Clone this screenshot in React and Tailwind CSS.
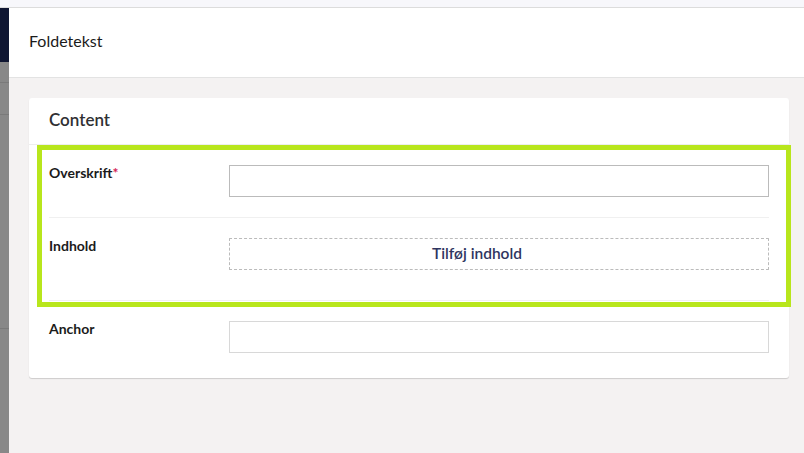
export default function App() {
  const rows = [
    { label: "Overskrift", required: true, kind: "input", border: "border-[#bbbbbb]" },
    { label: "Indhold", kind: "blocks" },
    { label: "Anchor", kind: "input", border: "border-[#d8d8d8]", last: true },
  ]

  return (
    <div className="h-[453px] w-[804px] overflow-hidden bg-[#f6f6f9] font-['Lato',sans-serif] text-[#1b1b1b]">
      <div className="h-[8px] border-b border-[#dcdcdc] bg-[#f7f7fb]"></div>
      <div className="flex h-[445px]">
        {/* backdrop strip behind the dialog */}
        <div className="flex w-[9px] flex-col bg-[#888888]">
          <div className="h-[54px] bg-[#0f1632]"></div>
          <div className="h-[20px]"></div>
          <div className="h-[32px] border-t border-[#7a7a7a]"></div>
          <div className="h-[214px] border-t border-[#7a7a7a]"></div>
          <div className="border-t border-[#7a7a7a]"></div>
        </div>

        <div className="flex flex-1 flex-col bg-[#f4f2f2]">
          <div className="flex h-[70px] items-center border-b border-[#e3e3e3] bg-white px-5 pb-[3px]">
            <h1 className="text-[16px] text-[#1b1b1b]">Foldetekst</h1>
          </div>

          <div className="pb-5 pl-5 pr-[15px] pt-5">
            <div className="relative rounded-[3px] bg-white shadow-[0_1px_1px_rgba(0,0,0,0.16)]">
              <div className="flex h-[47px] items-center border-b border-[#eeeeee] px-5 pb-[2px]">
                <h2 className="text-[17px] font-semibold text-[#303033]">Content</h2>
              </div>

              <div className="px-5 pb-[5px]">
                {rows.map((row) => (
                  <div
                    key={row.label}
                    className={`flex py-5 ${row.last ? "" : "border-b border-[#f0f0f0]"} ${row.kind === "blocks" ? "pb-[30px]" : ""}`}
                  >
                    <div className="w-[180px] pt-[1px] text-[14px] font-bold leading-[14px] text-[#1b1b1b]">
                      {row.label}
                      {row.required && <span className="text-[#d42054]">*</span>}
                    </div>
                    {row.kind === "input" ? (
                      <div className={`h-8 flex-1 border bg-white ${row.border}`}></div>
                    ) : (
                      <button className="flex h-8 flex-1 items-center justify-center rounded-[1px] border border-dashed border-[#bbbbbb] pr-[44px] text-[15.5px] font-semibold text-[#2f3560]">
                        Tilføj indhold
                      </button>
                    )}
                  </div>
                ))}
              </div>

              {/* highlight annotation */}
              <div className="pointer-events-none absolute left-[8px] top-[47px] h-[162px] w-[754px] border-[5px] border-[#b8e61c]"></div>
            </div>
          </div>
        </div>
      </div>
    </div>
  )
}
